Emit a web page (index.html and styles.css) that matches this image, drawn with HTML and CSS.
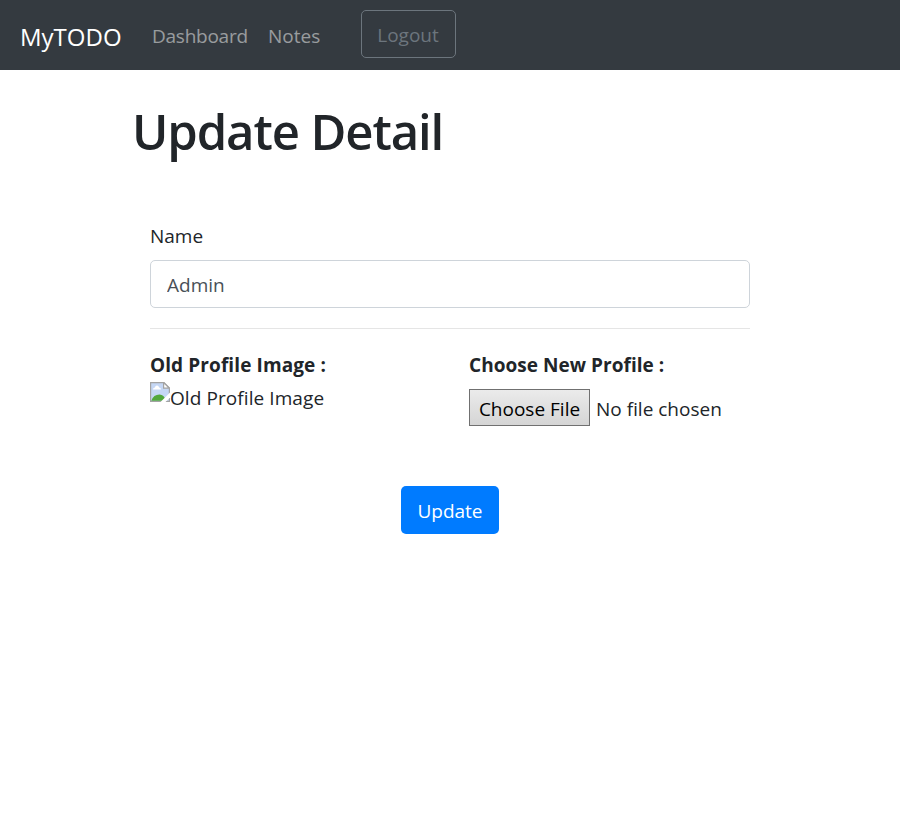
FILE: index.html
```html
<!DOCTYPE html>
<html lang="en">
<head>
<meta charset="utf-8">
<title>MyTODO</title>
<link rel="stylesheet" href="styles.css">
</head>
<body>
<nav class="navbar">
  <a class="brand">MyTODO</a>
  <a class="nav-link">Dashboard</a>
  <a class="nav-link">Notes</a>
  <button class="logout">Logout</button>
</nav>
<main class="container">
  <h1 class="title">Update Detail</h1>
  <form class="form">
    <label class="label" for="name">Name</label>
    <input class="control" id="name" value="Admin">
    <hr class="rule">
    <div class="row">
      <div class="col-old">
        <b class="heading heading-old">Old Profile Image :</b>
        <div class="old-image">
          <svg class="broken" width="20" height="20" viewBox="0 0 20 20">
            <path d="M.6.6H14L19.4 6V19.4H.6Z" fill="#c5d7f5" stroke="#a3a3a3" stroke-width="1.2"/>
            <path d="M3 7.500q0-1.900 1.900-1.900Q5.300 3.500 7 3.500t2.100 2.100q1.900 0 1.900 1.900Z" fill="#fff"/>
            <path d="M1.300 18.700Q3.500 12.500 9.500 12.500q4.500 0 6.500 6.200Z" fill="#52a83c"/>
            <path d="M13.600.6V6.200H19.400Z" fill="#fff" stroke="#a3a3a3" stroke-width="1.200"/>
            <path d="M20 10.500 10.500 20H15.500L20 15.500Z" fill="#fff"/>
          </svg><span class="alt">Old Profile Image</span>
        </div>
      </div>
      <div class="col-new">
        <b class="heading heading-new">Choose New Profile :</b>
        <div class="file"><button type="button" class="file-button">Choose File</button><span class="file-name">No file chosen</span></div>
      </div>
    </div>
    <button type="button" class="update">Update</button>
  </form>
</main>
</body>
</html>
```
FILE: styles.css
```css
* { box-sizing: border-box; }
body { margin: 0; background: #fff; color: #212529; font: 19px/30px "Open Sans", "Noto Sans", sans-serif; white-space: nowrap; }
button, input { font: inherit; }
.navbar { display: flex; align-items: center; width: 900px; height: 70px; padding: 0 20px; background: #343a40; }
.brand { width: 132px; color: #fff; font-size: 24px; padding-top: 4px; }
.nav-link { color: rgba(255,255,255,.5); margin-right: 20px; padding-top: 2px; width: 96px; letter-spacing: -.25px; }
.nav-link + .nav-link { width: 53px; margin-right: 40px; letter-spacing: 0; }
.logout { width: 95px; height: 48px; margin-top: -2px; padding: 2px 1px 0 0; border: 1px solid #6c757d; border-radius: 5px; background: none; color: #6c757d; }
.container { width: 636px; margin: 0 auto 0 132px; }
.title { margin: 31px 0 0; font-size: 49px; line-height: 60px; font-weight: 600; letter-spacing: -1.1px; }
.form { display: flex; flex-direction: column; width: 600px; margin: 60px 0 0 18px; }
.label { height: 39px; }
.control { width: 100%; height: 48px; padding: 2px 15px 0 16px; border: 1px solid #ced4da; border-radius: 5px; color: #495057; background: #fff; }
.rule { width: 100%; height: 1px; margin: 20px 0 21px; border: 0; background: #e5e5e5; }
.row { display: flex; }
.col-old { width: 319px; }
.heading { display: block; }
.heading-old { letter-spacing: .1px; }
.heading-new { letter-spacing: .04px; }
.old-image { display: flex; margin-top: 2px; }
.alt { padding-top: 1px; letter-spacing: .08px; }
.file { display: flex; align-items: center; margin-top: 9px; }
.file-button { width: 121px; height: 37px; padding: 2px 0 0; border: 1px solid #707070; background: linear-gradient(#ebebeb, #d5d5d5); color: #000; }
.file-name { margin-left: 6px; padding-top: 2px; }
.update { align-self: center; width: 98px; height: 48px; margin-top: 60px; padding: 2px 0 0; border: 0; border-radius: 5px; background: #007bff; color: #fff; }
```
